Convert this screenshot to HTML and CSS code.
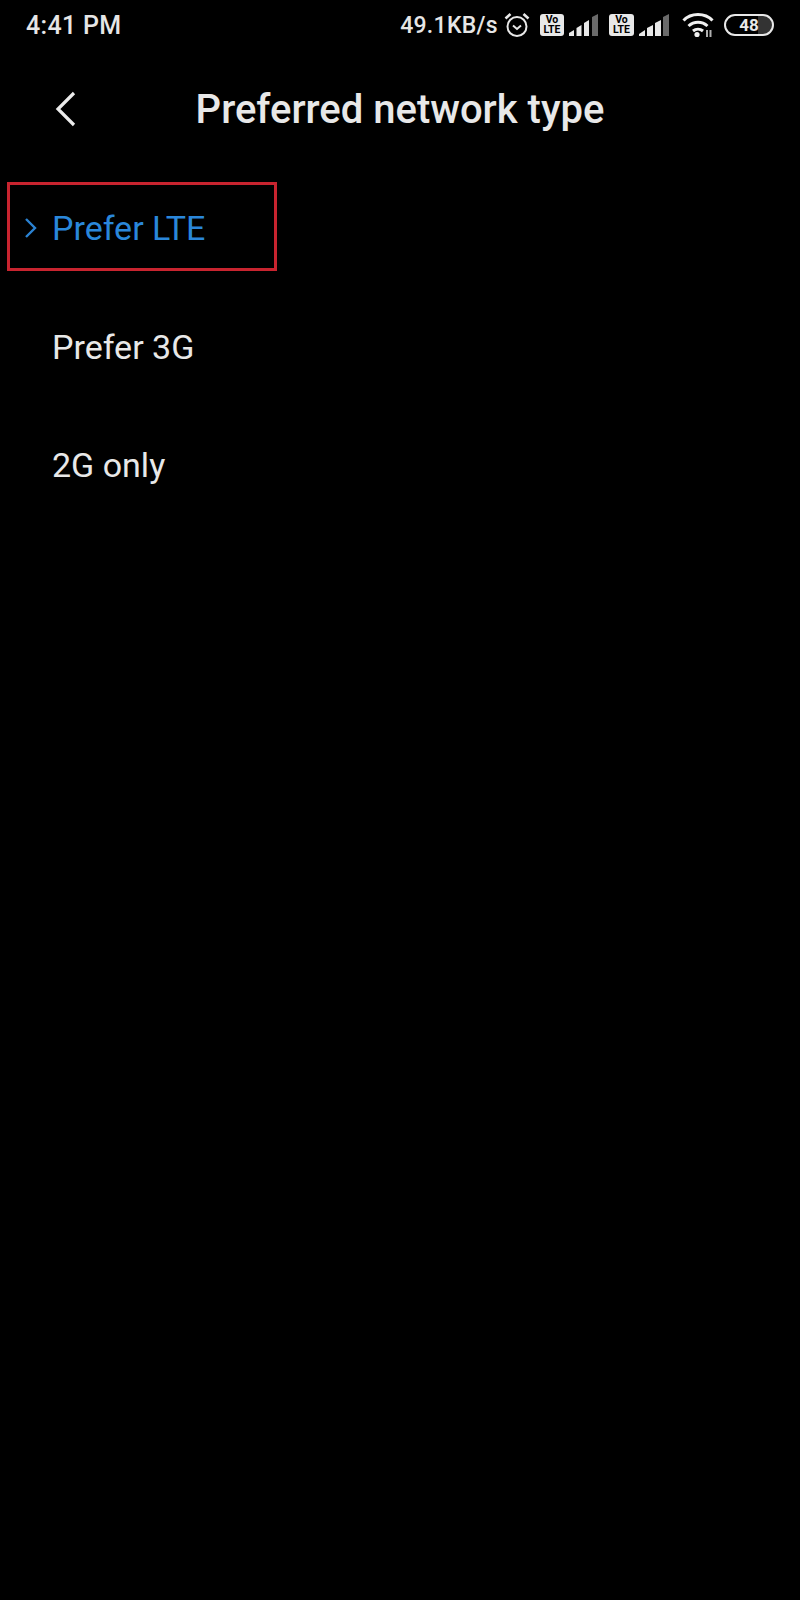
FILE: index.html
```html
<!DOCTYPE html>
<html lang="en">
<head>
<meta charset="utf-8">
<title>Preferred network type</title>
<link rel="stylesheet" href="styles.css">
</head>
<body>
<div class="screen">
  <header class="status">
    <span class="time">4:41 PM</span>
    <div class="status-right">
      <span class="speed">49.1KB/s</span>
      <svg class="alarm" width="26" height="26" viewBox="0 0 26 26" fill="none" stroke="#e8e8e8" stroke-width="2"><circle cx="13" cy="14.500" r="9.500"/><path d="M1.500 6.500 6.500 2M24.500 6.500 19.500 2" stroke-width="2.600"/><path d="M9 13.500l4 3.500 4-3.500" stroke-width="2"/></svg>
      <span class="volte"><span>Vo</span><span>LTE</span></span>
      <svg class="signal signal-one" width="29" height="22" viewBox="0 0 29 22"><path d="M0 22v-3l5-3v6z" fill="#e8e8e8"/><path d="M7.500 22V14l5-3v11z" fill="#e8e8e8"/><path d="M15 22V9l5-3v16z" fill="#e8e8e8"/><path d="M23 22V3l6-3v22z" fill="#6a6a6a"/></svg>
      <span class="volte volte-two"><span>Vo</span><span>LTE</span></span>
      <svg class="signal signal-two" width="30" height="22" viewBox="0 0 30 22"><path d="M0 22v-2l6-4v6z" fill="#e8e8e8"/><path d="M8 22V14l6-3v11z" fill="#e8e8e8"/><path d="M16 22V9l6-3v16z" fill="#e8e8e8"/><path d="M24 22V3l6-3v22z" fill="#6a6a6a"/></svg>
      <svg class="wifi" width="32" height="26" viewBox="0 0 32 26" fill="none" stroke="#f0f0f0" stroke-width="3"><path d="M1.500 8.500C9 .5 23 .5 30.500 8.500"/><path d="M6.500 14c5.500-5 13.500-5 19 0"/><path d="M11 19c3-2.500 7-2.500 10 0"/><circle cx="15" cy="22.500" r="2.600" fill="#f0f0f0" stroke="none"/><path d="M25 18v7M28.500 18v7" stroke-width="2" stroke="#b0b0b0"/></svg>
      <span class="battery">48</span>
    </div>
  </header>
  <div class="title-bar">
    <svg class="back" width="24" height="36" viewBox="0 0 24 36" fill="none" stroke="#ececec" stroke-width="3.200"><path d="M22 2 6 18l16 16"/></svg>
    <h1 class="title">Preferred network type</h1>
  </div>
  <ul class="options">
    <li class="option selected">
      <svg class="check" width="14" height="22" viewBox="0 0 14 22" fill="none" stroke="#2a82d2" stroke-width="2.400"><path d="M2 2l9 9-9 9"/></svg>
      <span>Prefer LTE</span>
    </li>
    <li class="option">Prefer 3G</li>
    <li class="option">2G only</li>
  </ul>
  <div class="highlight"></div>
</div>
</body>
</html>
```

FILE: styles.css
```css
* { box-sizing: border-box; }
html, body { margin: 0; padding: 0; background: #000; }
.screen {
  position: relative;
  width: 800px;
  height: 1600px;
  background: #000;
  color: #eee;
  font-family: Roboto, "Liberation Sans", sans-serif;
  overflow: hidden;
}
.status {
  display: flex;
  justify-content: space-between;
  align-items: center;
  height: 50px;
  padding: 0 26px 0 26px;
}
.time { font-size: 25px; font-weight: 500; color: #e6e6e6; letter-spacing: .3px; }
.status-right { display: flex; align-items: center; }
.speed { font-size: 23px; font-weight: 500; color: #e6e6e6; letter-spacing: .3px; margin-right: 6px; }
.alarm { margin-right: 10px; }
.volte {
  display: flex;
  flex-direction: column;
  align-items: center;
  justify-content: center;
  width: 24px;
  height: 22px;
  background: #e8e8e8;
  border-radius: 3px;
  color: #000;
  font-size: 10.500px;
  font-weight: 700;
  line-height: 10px;
  margin-right: 5px;
}
.volte-two { margin-left: 11px; width: 25px; }
.wifi { margin-left: 13px; margin-right: 10px; }
.signal { display: block; }
.battery {
  display: flex;
  align-items: center;
  justify-content: center;
  width: 50px;
  height: 22px;
  border: 2px solid #e8e8e8;
  border-radius: 11px;
  font-size: 17px;
  font-weight: 700;
  color: #e8e8e8;
  background: linear-gradient(90deg, #000 0 70%, #333 70%);
}
.title-bar {
  position: relative;
  display: flex;
  align-items: center;
  justify-content: center;
  height: 119px;
}
.back { position: absolute; left: 52px; top: 41px; }
.title { margin: 0; font-size: 40px; font-weight: 500; color: #e8e8e8; }
.options { list-style: none; margin: 0; padding: 0; }
.option {
  position: relative;
  display: flex;
  align-items: center;
  height: 118.500px;
  padding-left: 52px;
  font-size: 34px;
  color: #e8e8e8;
}
.selected { color: #2a87da; }
.check { position: absolute; left: 24px; top: 48px; }
.highlight {
  position: absolute;
  left: 7px;
  top: 182px;
  width: 270px;
  height: 89px;
  border: 3.500px solid #c8242f;
}
```
